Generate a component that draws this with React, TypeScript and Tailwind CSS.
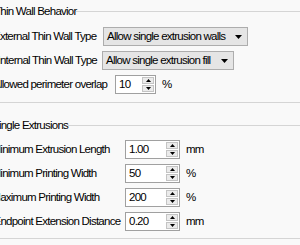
import React from "react";

function Combo({ value, width }: { value: string; width: string }) {
  return (
    <div
      className={`${width} h-[19px] flex items-center justify-between border border-[#adadad] bg-[#e5e5e5] pl-[3px] pr-[5px] shrink-0`}
    >
      <span className="whitespace-nowrap">{value}</span>
      <svg width="7" height="4" viewBox="0 0 7 4" className="shrink-0">
        <polygon points="0,0 7,0 3.5,4" fill="#000" />
      </svg>
    </div>
  );
}

function Spin({ value, width }: { value: string; width: string }) {
  return (
    <div className={`${width} h-[19px] flex border border-[#a0a0a0] bg-white shrink-0`}>
      <span className="flex-1 pl-[3px] leading-[17px] whitespace-nowrap">{value}</span>
      <div className="w-[14px] flex flex-col gap-px p-px">
        <div className="flex-1 flex items-center justify-center bg-[#ebebeb] border border-[#c4c4c4]">
          <svg width="5" height="3" viewBox="0 0 5 3">
            <polygon points="0,3 2.5,0 5,3" fill="#000" />
          </svg>
        </div>
        <div className="flex-1 flex items-center justify-center bg-[#ebebeb] border border-[#c4c4c4]">
          <svg width="5" height="3" viewBox="0 0 5 3">
            <polygon points="0,0 5,0 2.5,3" fill="#000" />
          </svg>
        </div>
      </div>
    </div>
  );
}

function Title({ text, cls }: { text: string; cls: string }) {
  return (
    <div className="h-[14px] flex items-center">
      <span className={`${cls} shrink-0 whitespace-nowrap leading-[14px]`}>{text}</span>
      <div className="flex-1 h-px bg-[#d5d5d5]" />
    </div>
  );
}

function Row({ label, cls, children }: { label: string; cls: string; children: React.ReactNode }) {
  return (
    <div className="h-[19px] flex items-center">
      <span className={`${cls} shrink-0 whitespace-nowrap`}>{label}</span>
      {children}
    </div>
  );
}

export default function App() {
  return (
    <div className="w-[300px] h-[245px] overflow-hidden bg-[#f9f9f9] text-black text-[11.5px] tracking-[-0.75px] font-['Liberation_Sans',Arial,sans-serif] pt-[4px]">
      {/* Thin wall */}
      <section className="border-b border-[#d5d5d5] pb-[8px]">
        <Title text="Thin Wall Behavior" cls="ml-[-6px] w-[82px]" />
        <div className="mt-[9px] flex flex-col gap-[5px]">
          <Row label="External Thin Wall Type" cls="ml-[-7px] w-[110px]">
            <Combo value="Allow single extrusion walls" width="w-[145px]" />
          </Row>
          <Row label="Internal Thin Wall Type" cls="ml-[-2.5px] w-[104.5px]">
            <Combo value="Allow single extrusion fill" width="w-[132px]" />
          </Row>
          <Row label="Allowed perimeter overlap" cls="ml-[-7px] w-[122px]">
            <Spin value="10" width="w-[41px]" />
            <span className="ml-[6px]">%</span>
          </Row>
        </div>
      </section>

      {/* Single extrusions */}
      <section className="mt-[15px] border-b border-[#d5d5d5] pb-[7px]">
        <Title text="Single Extrusions" cls="ml-[-8px] w-[76px]" />
        <div className="mt-[8px] flex flex-col gap-[5px]">
          <Row label="Minimum Extrusion Length" cls="ml-[-8.5px] w-[133.5px]">
            <Spin value="1.00" width="w-[55px]" />
            <span className="ml-[6px]">mm</span>
          </Row>
          <Row label="Minimum Printing Width" cls="ml-[-8.5px] w-[133.5px]">
            <Spin value="50" width="w-[55px]" />
            <span className="ml-[6px]">%</span>
          </Row>
          <Row label="Maximum Printing Width" cls="ml-[-8.7px] w-[133.7px]">
            <Spin value="200" width="w-[55px]" />
            <span className="ml-[6px]">%</span>
          </Row>
          <Row label="Endpoint Extension Distance" cls="ml-[-6.5px] w-[131.5px]">
            <Spin value="0.20" width="w-[55px]" />
            <span className="ml-[6px]">mm</span>
          </Row>
        </div>
      </section>
    </div>
  );
}
